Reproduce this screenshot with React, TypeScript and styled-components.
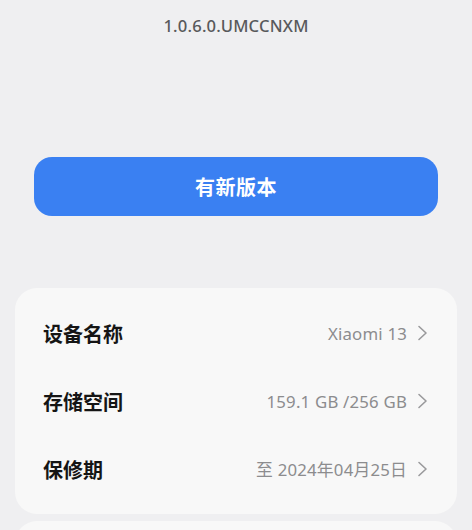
import styled, { createGlobalStyle } from 'styled-components';

const GlobalStyle = createGlobalStyle`
  html, body {
    margin: 0;
    padding: 0;
    background: #efeff1;
  }
  body {
    font-family: "Noto Sans", "Noto Sans CJK SC", sans-serif;
  }
`;

const Page = styled.div`
  width: 472px;
  height: 530px;
  overflow: hidden;
  box-sizing: border-box;
  padding: 0 15px;
  background: #efeff1;
`;

const Version = styled.div`
  margin-top: 14px;
  height: 24px;
  line-height: 24px;
  text-align: center;
  font-size: 16.6px;
  font-weight: 500;
  color: #58595b;
  letter-spacing: 0.2px;
`;

const ButtonWrap = styled.div`
  padding: 0 19px;
  margin-top: 119px;
`;

const UpdateButton = styled.button`
  display: flex;
  align-items: center;
  justify-content: center;
  width: 100%;
  height: 59px;
  border: none;
  border-radius: 18px;
  background: #3a80f2;
  color: #ffffff;
  font-family: "Noto Sans CJK SC", sans-serif;
  font-size: 20px;
  font-weight: 700;
  letter-spacing: 0.5px;
`;

const Card = styled.div`
  margin-top: ${(p: { $gap: number }) => p.$gap}px;
  background: #f8f8f8;
  border-radius: 22px;
  padding: 11px 0;
`;

const Row = styled.div`
  display: flex;
  align-items: center;
  justify-content: space-between;
  height: 68px;
  padding: 0 29px 0 28px;
`;

const Label = styled.span`
  font-family: "Noto Sans CJK SC", sans-serif;
  font-size: 20px;
  font-weight: 700;
  color: #151515;
`;

const Value = styled.span`
  display: flex;
  align-items: center;
  gap: 10px;
  font-family: "Noto Sans", "Noto Sans CJK SC", sans-serif;
  font-size: 16.8px;
  color: #8c8c8e;
  letter-spacing: 0.2px;
`;

const Chevron = () => (
  <svg width="11" height="16" viewBox="0 0 11 16" fill="none">
    <polyline
      points="2,1.5 9,8 2,14.5"
      stroke="#9a9a9c"
      strokeWidth="1.6"
      strokeLinecap="round"
      strokeLinejoin="round"
    />
  </svg>
);

const rows = [
  { label: '设备名称', value: 'Xiaomi 13' },
  { label: '存储空间', value: '159.1 GB /256 GB' },
  { label: '保修期', value: '至 2024年04月25日' },
];

export default function App() {
  return (
    <>
      <GlobalStyle />
      <Page>
        <Version>1.0.6.0.UMCCNXM</Version>
        <ButtonWrap>
          <UpdateButton>有新版本</UpdateButton>
        </ButtonWrap>
        <Card $gap={72}>
          {rows.map((r) => (
            <Row key={r.label}>
              <Label>{r.label}</Label>
              <Value>
                {r.value}
                <Chevron />
              </Value>
            </Row>
          ))}
        </Card>
        <Card $gap={7}>
          <Row>
            <Label>&nbsp;</Label>
          </Row>
        </Card>
      </Page>
    </>
  );
}
